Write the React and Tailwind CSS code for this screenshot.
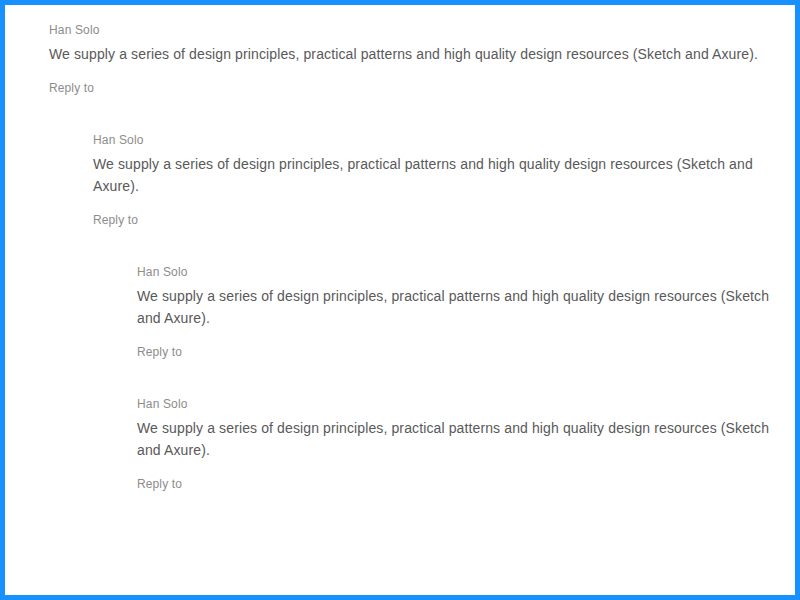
const text =
  'We supply a series of design principles, practical patterns and high quality design resources (Sketch and Axure).'

function Comment({ children }) {
  return (
    <div>
      <div className="flex py-4">
        <div className="w-[32px] mr-[12px] shrink-0" />
        <div className="flex-1 min-w-0">
          <div className="mb-1 text-[12px] leading-[18px] tracking-[0.15px] text-[#8c8c8c]">Han Solo</div>
          <p className="text-[14px] leading-[22px] tracking-[0.12px] text-[#595959]">{text}</p>
          <ul className="mt-3 text-[12px] leading-[22px] tracking-[0.12px] text-[#8c8c8c]">
            <li>
              <span className="cursor-pointer">Reply to</span>
            </li>
          </ul>
        </div>
      </div>
      {children && <div className="ml-[44px]">{children}</div>}
    </div>
  )
}

export default function App() {
  return (
    <div className="h-[600px] w-[800px] border-[5px] border-[#1890ff] bg-white font-['Liberation_Sans',Arial,sans-serif]">
      <Comment>
        <Comment>
          <Comment />
          <Comment />
        </Comment>
      </Comment>
    </div>
  )
}
